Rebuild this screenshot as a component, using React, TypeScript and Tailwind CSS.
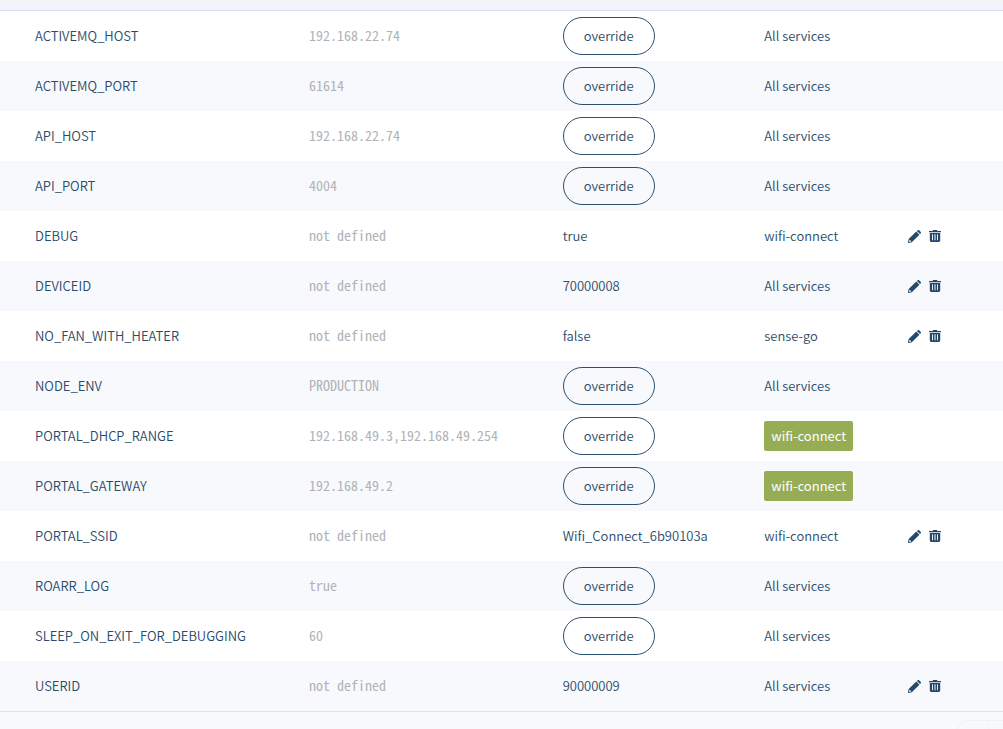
type Variable = {
  name: string;
  fleetValue?: string;
  deviceValue?: string;
  service?: string;
  tagged?: boolean;
};

const variables: Variable[] = [
  { name: "ACTIVEMQ_HOST", fleetValue: "192.168.22.74" },
  { name: "ACTIVEMQ_PORT", fleetValue: "61614" },
  { name: "API_HOST", fleetValue: "192.168.22.74" },
  { name: "API_PORT", fleetValue: "4004" },
  { name: "DEBUG", deviceValue: "true", service: "wifi-connect" },
  { name: "DEVICEID", deviceValue: "70000008" },
  { name: "NO_FAN_WITH_HEATER", deviceValue: "false", service: "sense-go" },
  { name: "NODE_ENV", fleetValue: "PRODUCTION" },
  { name: "PORTAL_DHCP_RANGE", fleetValue: "192.168.49.3,192.168.49.254", service: "wifi-connect", tagged: true },
  { name: "PORTAL_GATEWAY", fleetValue: "192.168.49.2", service: "wifi-connect", tagged: true },
  { name: "PORTAL_SSID", deviceValue: "Wifi_Connect_6b90103a", service: "wifi-connect" },
  { name: "ROARR_LOG", fleetValue: "true" },
  { name: "SLEEP_ON_EXIT_FOR_DEBUGGING", fleetValue: "60" },
  { name: "USERID", deviceValue: "90000009" },
];

function PencilIcon() {
  return (
    <svg viewBox="0 0 13 13" className="size-[13px]" fill="currentColor" aria-hidden="true">
      <path d="M8.9 1l.6-.6c.6-.5 1.3-.5 1.8 0l1.3 1.3c.5.5.5 1.2 0 1.8l-.6.6z" />
      <path
        fillRule="evenodd"
        d="M8.3 1.6l3.1 3.1-7.6 7.5-3.2.7c-.4.1-.7-.2-.6-.6l.7-3.2zM1.5 9.9l-.4 1.5.5.5 1.5-.4v-.8h-.8v-.8z"
      />
    </svg>
  );
}

function TrashIcon() {
  return (
    <svg viewBox="0 0 12 12" className="size-3" fill="currentColor" aria-hidden="true">
      <path d="M0 .9h3.5L4.2 0h3.6l.7.9H12v1.4H0z" />
      <path
        fillRule="evenodd"
        d="M.8 3h10.4v7.6c0 .8-.6 1.4-1.4 1.4H2.2c-.8 0-1.4-.6-1.4-1.4zM3 4.3v6h.9v-6zm2.5 0v6h1v-6zm2.6 0v6H9v-6z"
      />
    </svg>
  );
}

function VariableRow({ item }: { item: Variable }) {
  const service = item.service ?? "All services";
  return (
    <tr className="h-[50px] odd:bg-white even:bg-[#f8f9fd]">
      <td className="pl-[35px]">{item.name}</td>
      <td className="pb-0.5 pl-[10px] font-['Noto_Sans_Mono_CJK_SC','Liberation_Mono',monospace] text-[14px] text-[#b0b3b6]">
        {item.fleetValue ?? "not defined"}
      </td>
      <td className="pl-[10px]">
        {item.deviceValue ?? (
          <button
            type="button"
            aria-label={`override ${item.name}`}
            className="block h-[38px] rounded-full border border-[#2a506f] px-5"
          >
            override
          </button>
        )}
      </td>
      <td className="pl-[10px]">
        {item.tagged ? (
          <span className="inline-block rounded-xs bg-[#96ad55] px-[7px] leading-[30px] font-normal text-white">{service}</span>
        ) : (
          service
        )}
      </td>
      <td className="pl-[10px]">
        {item.deviceValue && (
          <div className="flex items-center gap-2 text-[#24496a]">
            <button type="button" aria-label={`Edit ${item.name}`}>
              <PencilIcon />
            </button>
            <button type="button" aria-label={`Delete ${item.name}`}>
              <TrashIcon />
            </button>
          </div>
        )}
      </td>
    </tr>
  );
}

export default function App() {
  return (
    <main className="flex h-screen flex-col overflow-hidden bg-[#f8f9fd] font-['Noto_Sans_CJK_SC','Open_Sans',sans-serif] text-[13px] leading-5 font-[350] text-[#2a4b69]">
      <div className="h-[11px] shrink-0 border-b border-[#dddff0] bg-[#f3f4fa]" />
      <table className="w-full table-fixed border-collapse text-left" aria-label="Device variables">
        <colgroup>
          <col className="w-[29.8%]" />
          <col className="w-[25.3%]" />
          <col className="w-[20.1%]" />
          <col className="w-[14.3%]" />
          <col />
        </colgroup>
        <tbody>
          {variables.map((item) => (
            <VariableRow key={item.name} item={item} />
          ))}
        </tbody>
      </table>
      <footer className="flex min-h-0 flex-1 justify-end border-t border-[#dde1ea] pt-2">
        <div className="flex h-[38px] w-[50px] rounded-l-full border border-r-0 border-[#f0f2f7]">
          <div className="w-[35px] border-r border-[#f0f2f7]" />
        </div>
      </footer>
    </main>
  );
}
